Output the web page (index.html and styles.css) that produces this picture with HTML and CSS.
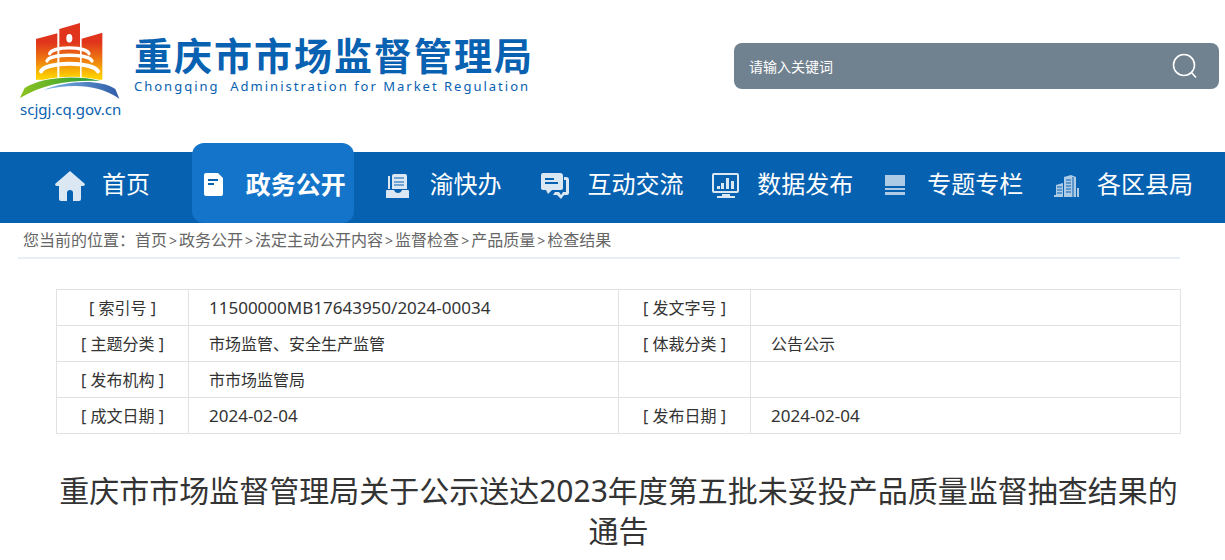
FILE: index.html
```html
<!DOCTYPE html>
<html lang="zh-CN">

<head>
  <meta charset="UTF-8">
  <meta name="viewport" content="width=device-width, initial-scale=1.0">
  <title>重庆市市场监督管理局</title>
  <link rel="stylesheet" href="styles.css">
</head>

<body>
  <header class="header">
    <a class="logo" href="#">
      <span class="logo-mark">
        <svg class="logo-img" viewBox="60 39 300 228" aria-hidden="true">
          <defs>
            <linearGradient id="hall" gradientUnits="userSpaceOnUse" x1="0" y1="60" x2="0" y2="208">
              <stop offset="0.25" stop-color="#e0351c"></stop>
              <stop offset="0.6" stop-color="#ee7a10"></stop>
              <stop offset="0.95" stop-color="#fdd000"></stop>
            </linearGradient>
            <linearGradient id="green" x1="0" x2="1">
              <stop offset="0" stop-color="#8fc31f"></stop>
              <stop offset="1" stop-color="#1f9a38"></stop>
            </linearGradient>
            <linearGradient id="blue" x1="0" x2="1">
              <stop offset="0" stop-color="#7fb8e6"></stop>
              <stop offset="1" stop-color="#2f5ca8"></stop>
            </linearGradient>
          </defs>
          <path fill="url(#hall)" d="M108 87L172 70V209H108zM178 57L240 39V209H178zM245 86L307 68V209H245z"></path>
          <ellipse cx="208" cy="85" rx="9" ry="13" fill="#fff"></ellipse>
          <g fill="none" stroke="#fff" stroke-width="10" stroke-linecap="round">
            <path d="M149 131C158 108 258 108 267 131"></path>
            <path d="M141 153C150 130 266 130 276 153"></path>
            <path stroke-width="12" d="M123 184C136 154 280 154 294 184"></path>
          </g>
          <path fill="url(#green)" stroke="#fff" stroke-width="4" paint-order="stroke" d="M59 265L74 234C125 201 230 194 301 213C215 208 125 222 59 265z"></path>
          <path fill="url(#blue)" d="M130 240C195 214 295 204 346 237L358 266C295 224 220 220 130 240z"></path>
        </svg>
        <span class="logo-domain">scjgj.cq.gov.cn</span>
      </span>
      <span class="logo-text">
        <span class="logo-cn">重庆市市场监督管理局</span>
        <span class="logo-en">Chongqing&nbsp; Administration for Market Regulation</span>
      </span>
    </a>
    <form class="search">
      <input class="search-input" type="text" placeholder="请输入关键词" aria-label="请输入关键词">
      <button class="search-btn" type="button" aria-label="搜索">
        <svg width="26" height="26" viewBox="0 0 26 26" fill="none" stroke="#fff" stroke-width="1.6">
          <circle cx="13" cy="12" r="10.5"></circle>
          <path d="M20 19L25 24.5"></path>
        </svg>
      </button>
    </form>
  </header>

  <nav class="nav">
    <a class="nav-item" href="#">
      <svg class="nav-icon" viewBox="0 0 30 30"><path d="M14 0L29 13Q29 15 27 15H25V28Q25 30 23 30H17V22Q17 19 14 19Q11 19 11 22V30H5Q3 30 3 28V15H1Q-1 15 -1 13z"></path></svg>
      <span>首页</span>
    </a>
    <a class="nav-item active" href="#">
      <svg class="nav-icon" viewBox="0 0 30 30"><path d="M5 2H18L23 7V23Q23 25 21 25H6Q4 25 4 23V4Q4 2 6 2z"></path><path class="line" d="M8 9H18M8 13H14"></path></svg>
      <span>政务公开</span>
    </a>
    <a class="nav-item" href="#">
      <svg class="nav-icon" viewBox="0 0 30 30"><path d="M4 5H6V18H4zM10 3H21Q23 3 23 5V18H8V5Q8 3 10 3zM3 19H10Q11 22 14 22Q17 22 18 19H24Q25 19 25 20V27H2V20Q2 19 3 19z"></path><path class="line thin" d="M10 7H20M10 11H20M10 14H20"></path></svg>
      <span>渝快办</span>
    </a>
    <a class="nav-item" href="#">
      <svg class="nav-icon" viewBox="0 0 30 30"><path d="M2 2H19Q22 2 22 5V17Q22 19 20 19H11L7 23L5 19H3Q0 19 0 17V4Q0 2 2 2z"></path><path d="M23 6H25Q28 6 28 9V22Q28 24 26 24H23L20 28L16 24H12L14 21H18L20 24L22 21H25V9H23z"></path><path class="line" d="M4 8H13M4 12H17"></path></svg>
      <span>互动交流</span>
    </a>
    <a class="nav-item" href="#">
      <svg class="nav-icon" viewBox="0 0 30 30"><rect class="frame" x="2" y="3" width="25" height="18" rx="1"></rect><path d="M6 15H9V18H6zM10 12H13V18H10zM15 7H18V18H15zM20 10H23V18H20zM11 23H19V25H24V27H6V25H11z"></path></svg>
      <span>数据发布</span>
    </a>
    <a class="nav-item" href="#">
      <svg class="nav-icon dim" viewBox="0 0 30 30"><path d="M4 4H24V15H4zM4 17H24V19H4zM4 21H24V24H4z"></path></svg>
      <span>专题专栏</span>
    </a>
    <a class="nav-item" href="#">
      <svg class="nav-icon dim" viewBox="0 0 30 30"><path d="M13 6L20 4L25 6V26H13zM5 14L12 12V26H5zM3 24H5V26H3zM26 17H28V26H26z"></path><path class="line thin" d="M15 9H20M15 12H20M15 15H20M15 18H20M15 21H20M6 16H11M6 19H11M6 22H11M22 6V26"></path></svg>
      <span>各区县局</span>
    </a>
  </nav>

  <main class="main">
    <div class="crumbs">
      您当前的位置：<a href="#">首页</a><span class="sep">&gt;</span><a href="#">政务公开</a><span class="sep">&gt;</span><a href="#">法定主动公开内容</a><span class="sep">&gt;</span><a href="#">监督检查</a><span class="sep">&gt;</span><a href="#">产品质量</a><span class="sep">&gt;</span><a href="#">检查结果</a>
    </div>
    <article class="article">
      <table class="info">
        <tr>
          <th scope="row">[ 索引号 ]</th>
          <td class="num">11500000MB17643950/2024-00034</td>
          <th scope="row">[ 发文字号 ]</th>
          <td></td>
        </tr>
        <tr>
          <th scope="row">[ 主题分类 ]</th>
          <td>市场监管、安全生产监管</td>
          <th scope="row">[ 体裁分类 ]</th>
          <td>公告公示</td>
        </tr>
        <tr>
          <th scope="row">[ 发布机构 ]</th>
          <td>市市场监管局</td>
          <th></th>
          <td></td>
        </tr>
        <tr>
          <th scope="row">[ 成文日期 ]</th>
          <td class="num">2024-02-04</td>
          <th scope="row">[ 发布日期 ]</th>
          <td class="num">2024-02-04</td>
        </tr>
      </table>
      <h1 class="title">重庆市市场监督管理局关于公示送达2023年度第五批未妥投产品质量监督抽查结果的通告</h1>
    </article>
  </main>
</body>

</html>
```

FILE: styles.css
```css
* {
  box-sizing: border-box;
}

body {
  margin: 0;
  background: #fff;
  color: #333;
  font-family: "Noto Sans", "Noto Sans CJK SC", sans-serif;
  font-size: 16px;
}

a {
  color: inherit;
  text-decoration: none;
}

.header {
  display: flex;
  justify-content: space-between;
  align-items: flex-start;
  gap: 40px;
  height: 152px;
  padding: 23px 6px 0 20px;
}

.logo {
  display: flex;
  gap: 14px;
  color: #0861b1;
  white-space: nowrap;
}

.logo-mark {
  display: flex;
  flex-direction: column;
  width: 100px;
}

.logo-img {
  width: 100px;
  height: 76px;
}

.logo-domain {
  font-size: 15px;
  line-height: 20px;
}

.logo-text {
  display: flex;
  flex-direction: column;
  padding-top: 11px;
}

.logo-cn {
  font-size: 38px;
  font-weight: bold;
  line-height: 42px;
  letter-spacing: 2px;
}

.logo-en {
  font-size: 13px;
  line-height: 20px;
  letter-spacing: 2px;
}

.search {
  display: flex;
  width: 485px;
  height: 46px;
  margin-top: 20px;
  border-radius: 8px;
  background: #70818f;
}

.search-input {
  flex: 1;
  min-width: 0;
  padding: 0 15px;
  border: 0;
  outline: 0;
  background: none;
  color: #fff;
  font-family: inherit;
  font-size: 14px;
}

.search-input::placeholder {
  color: #fff;
  opacity: 1;
}

.search-btn {
  display: flex;
  justify-content: center;
  align-items: center;
  width: 70px;
  padding: 0;
  border: 0;
  background: none;
  cursor: pointer;
}

.nav {
  display: grid;
  grid-template-columns: repeat(7, 1fr);
  height: 71px;
  padding: 0 18px;
  background: #0761b1;
}

.nav-item {
  display: flex;
  justify-content: center;
  gap: 16px;
  margin: 0 4px;
  color: #fff;
  font-size: 24px;
  line-height: 64px;
  white-space: nowrap;
}

.nav-item.active {
  margin-top: -9px;
  padding-top: 9px;
  border-radius: 12px;
  background: #1474c9;
  font-size: 25px;
  font-weight: bold;
}

.nav-icon {
  width: 30px;
  height: 30px;
  margin-top: 19px;
  overflow: visible;
  fill: #dbe8f4;
}

.nav-icon .line {
  fill: none;
  stroke: #0761b1;
  stroke-width: 2;
}

.nav-icon .thin {
  stroke-width: 1;
}

.nav-icon .frame {
  fill: none;
  stroke: #dbe8f4;
  stroke-width: 2;
}

.nav-icon.dim {
  fill: #aecbe5;
}

.active .nav-icon {
  fill: #fff;
}

.main {
  padding: 0 45px 0 18px;
}

.crumbs {
  padding: 0 5px;
  border-bottom: 2px solid #e6eef8;
  color: #666;
  line-height: 34px;
}

.sep {
  margin: 0 2px;
  font-size: 14px;
  line-height: 1;
}

.article {
  margin-right: -1px;
  padding: 30px 0 0 38px;
}

.info {
  width: 100%;
  border-collapse: collapse;
  table-layout: fixed;
}

.info th,
.info td {
  height: 36px;
  padding: 0 20px;
  border: 1px solid #e2e2e2;
  line-height: 24px;
  text-align: left;
}

.info th {
  width: 132px;
  padding: 0;
  font-weight: normal;
  text-align: center;
}

.info .num {
  font-size: 17px;
}

.title {
  margin: 37px 0 0;
  font-size: 30px;
  font-weight: normal;
  line-height: 40px;
  text-align: center;
}
```
